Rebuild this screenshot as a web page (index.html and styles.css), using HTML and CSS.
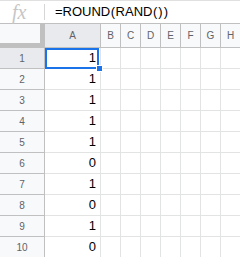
FILE: index.html
```html
<!DOCTYPE html>
<html>
<head>
<meta charset="utf-8">
<link rel="stylesheet" href="styles.css">
</head>
<body>
<div class="fbar">
  <span class="fx">fx</span>
  <span class="sep"></span>
  <span class="formula">=ROUND<span class="p">(</span>RAND<span class="p">(</span><span class="p">)</span><span class="p">)</span></span>
</div>
<div class="sheet">
  <div class="corner"></div>
  <div class="ch sel">A</div>
  <div class="ch">B</div>
  <div class="ch">C</div>
  <div class="ch">D</div>
  <div class="ch">E</div>
  <div class="ch">F</div>
  <div class="ch">G</div>
  <div class="ch">H</div>

  <div class="rh sel">1</div><div class="c val active">1<span class="handle"></span></div><div class="c"></div><div class="c"></div><div class="c"></div><div class="c"></div><div class="c"></div><div class="c"></div><div class="c"></div>
  <div class="rh">2</div><div class="c val">1</div><div class="c"></div><div class="c"></div><div class="c"></div><div class="c"></div><div class="c"></div><div class="c"></div><div class="c"></div>
  <div class="rh">3</div><div class="c val">1</div><div class="c"></div><div class="c"></div><div class="c"></div><div class="c"></div><div class="c"></div><div class="c"></div><div class="c"></div>
  <div class="rh">4</div><div class="c val">1</div><div class="c"></div><div class="c"></div><div class="c"></div><div class="c"></div><div class="c"></div><div class="c"></div><div class="c"></div>
  <div class="rh">5</div><div class="c val">1</div><div class="c"></div><div class="c"></div><div class="c"></div><div class="c"></div><div class="c"></div><div class="c"></div><div class="c"></div>
  <div class="rh">6</div><div class="c val">0</div><div class="c"></div><div class="c"></div><div class="c"></div><div class="c"></div><div class="c"></div><div class="c"></div><div class="c"></div>
  <div class="rh">7</div><div class="c val">1</div><div class="c"></div><div class="c"></div><div class="c"></div><div class="c"></div><div class="c"></div><div class="c"></div><div class="c"></div>
  <div class="rh">8</div><div class="c val">0</div><div class="c"></div><div class="c"></div><div class="c"></div><div class="c"></div><div class="c"></div><div class="c"></div><div class="c"></div>
  <div class="rh">9</div><div class="c val">1</div><div class="c"></div><div class="c"></div><div class="c"></div><div class="c"></div><div class="c"></div><div class="c"></div><div class="c"></div>
  <div class="rh">10</div><div class="c val">0</div><div class="c"></div><div class="c"></div><div class="c"></div><div class="c"></div><div class="c"></div><div class="c"></div><div class="c"></div>
</div>
</body>
</html>
```

FILE: styles.css
```css
* { box-sizing: border-box; }
html, body {
  margin: 0;
  padding: 0;
  width: 240px;
  height: 257px;
  overflow: hidden;
  background: #fff;
  font-family: "Liberation Sans", Arial, sans-serif;
}
.fbar {
  height: 24px;
  border-top: 1px solid #e0e0e0;
  border-bottom: 1px solid #c0c0c0;
  display: flex;
  align-items: center;
  background: #fff;
}
.fx {
  width: 44px;
  padding-left: 12px;
  font-family: "Liberation Serif", "DejaVu Serif", serif;
  font-style: italic;
  font-size: 20px;
  line-height: 22px;
  color: #c6c6c6;
}
.sep {
  width: 1px;
  height: 16px;
  background: #d6d6d6;
}
.formula {
  margin-left: 10px;
  font-size: 13px;
  color: #000;
  line-height: 22px;
}
.formula .p {
  padding: 0 0.5px;
}
.sheet {
  display: grid;
  grid-template-columns: 45px 56px repeat(7, 20px);
  grid-template-rows: 24px repeat(10, 21px);
}
.corner {
  background: #f8f9fa;
  border-right: 5px solid #c0c0c0;
  box-shadow: inset 0 -8px 0 -3px #c0c0c0;
}
.ch {
  background: #f8f9fa;
  border-right: 1px solid #c0c0c0;
  border-bottom: 1px solid #c0c0c0;
  color: #5f6368;
  font-size: 10px;
  display: flex;
  align-items: center;
  justify-content: center;
}
.ch.sel, .rh.sel { background: #e8eaed; }
.rh {
  background: #f8f9fa;
  border-right: 1px solid #c0c0c0;
  border-bottom: 1px solid #c0c0c0;
  color: #5f6368;
  font-size: 10px;
  display: flex;
  align-items: center;
  justify-content: center;
}
.c {
  border-right: 1px solid #e2e3e3;
  border-bottom: 1px solid #e2e3e3;
}
.val {
  font-size: 13px;
  color: #000;
  text-align: right;
  padding-right: 4px;
  line-height: 20px;
}
.active {
  position: relative;
}
.active::before {
  content: "";
  position: absolute;
  left: 0;
  top: 0;
  right: 1px;
  bottom: -1px;
  border: 2px solid #1a73e8;
}
.handle {
  position: absolute;
  right: -3px;
  bottom: -4px;
  width: 7px;
  height: 7px;
  background: #1a73e8;
  border: 1px solid #fff;
}
```
